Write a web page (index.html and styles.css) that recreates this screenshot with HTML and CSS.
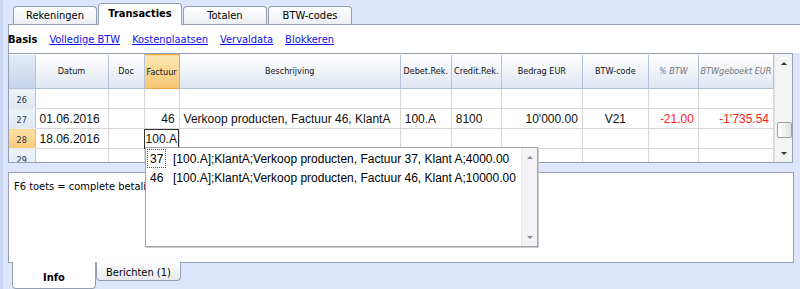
FILE: index.html
```html
<!DOCTYPE html>
<html lang="nl">
  <head>
    <meta charset="UTF-8" />
    <title>Transacties</title>
    <link rel="stylesheet" href="styles.css">
  </head>
  <body>
    <div class="window">
      <div class="tabs">
        <div class="tab">Rekeningen</div>
        <div class="tab active">Transacties</div>
        <div class="tab">Totalen</div>
        <div class="tab">BTW-codes</div>
      </div>

      <div class="panel">
        <nav class="views">
          <b>Basis</b>
          <a href="#">Volledige BTW</a>
          <a href="#">Kostenplaatsen</a>
          <a href="#">Vervaldata</a>
          <a href="#">Blokkeren</a>
        </nav>

        <div class="grid">
          <table>
            <colgroup>
              <col style="width:26px"><col style="width:73px"><col style="width:36px"><col style="width:35px">
              <col style="width:221px"><col style="width:51px"><col style="width:50px"><col style="width:81px">
              <col style="width:66px"><col style="width:50px"><col style="width:75px">
            </colgroup>
            <thead>
              <tr>
                <th class="corner"></th>
                <th>Datum</th>
                <th>Doc</th>
                <th class="current">Factuur</th>
                <th>Beschrijving</th>
                <th>Debet.Rek.</th>
                <th>Credit.Rek.</th>
                <th>Bedrag EUR</th>
                <th>BTW-code</th>
                <th class="calc">% BTW</th>
                <th class="calc">BTWgeboekt EUR</th>
              </tr>
            </thead>
            <tbody>
              <tr>
                <td class="rownum">26</td>
                <td></td><td></td><td></td><td></td><td></td><td></td><td></td><td></td><td></td><td></td>
              </tr>
              <tr>
                <td class="rownum">27</td>
                <td>01.06.2016</td>
                <td></td>
                <td class="num">46</td>
                <td>Verkoop producten, Factuur 46, KlantA</td>
                <td>100.A</td>
                <td>8100</td>
                <td class="num">10'000.00</td>
                <td class="center">V21</td>
                <td class="num neg">-21.00</td>
                <td class="num neg">-1'735.54</td>
              </tr>
              <tr>
                <td class="rownum active">28</td>
                <td>18.06.2016</td>
                <td></td>
                <td class="editing">100.A</td>
                <td></td><td></td><td></td><td></td><td></td><td></td><td></td>
              </tr>
              <tr>
                <td class="rownum">29</td>
                <td></td><td></td><td></td><td></td><td></td><td></td><td></td><td></td><td></td><td></td>
              </tr>
            </tbody>
          </table>

          <div class="vscroll">
            <span class="arrow up"></span>
            <span class="thumb"></span>
            <span class="arrow down"></span>
          </div>
        </div>
      </div>

      <div class="info-panel">F6 toets = complete betaling</div>

      <div class="bottom-tabs">
        <div class="btab active">Info</div>
        <div class="btab">Berichten (1)</div>
      </div>

      <!-- autocomplete list for the Factuur cell -->
      <div class="popup">
        <ul class="suggestions">
          <li class="focused"><span class="key">37</span>[100.A];KlantA;Verkoop producten, Factuur 37, Klant A;4000.00</li>
          <li><span class="key">46</span>[100.A];KlantA;Verkoop producten, Factuur 46, Klant A;10000.00</li>
        </ul>
        <div class="popup-scroll">
          <span class="arrow up"></span>
          <span class="arrow down"></span>
        </div>
      </div>
    </div>
  </body>
</html>
```

FILE: styles.css
```css
*,
*::before,
*::after {
  margin: 0;
  padding: 0;
  box-sizing: border-box;
}

:root {
  --page-blue: #dde6fa;
  --frame: #949fb3;
  --grid-line: #d6d6d6;
  --header-line: #b3c3da;
  --ui-font: "DejaVu Sans Condensed", "DejaVu Sans", sans-serif;
  --cell-font: "Liberation Sans", Arial, sans-serif;
}

body {
  background-color: var(--page-blue);
  width: 800px;
  height: 289px;
  overflow: hidden;
  font-family: var(--ui-font);
  font-size: 11px;
  color: #000;
}

.window {
  position: relative;
  height: 289px;
  border-left: 3px solid #cad8f1;
}

/* Top tabs */
.tabs {
  display: flex;
  align-items: flex-end;
  height: 24px;
  padding-left: 10px;
}

.tab {
  width: 84px;
  height: 18px;
  margin-right: 1px;
  border: 1px solid var(--frame);
  border-bottom: none;
  border-radius: 4px 4px 0 0;
  background: linear-gradient(#ffffff, #eceef2);
  text-align: center;
  line-height: 17px;
}

.tab.active {
  position: relative;
  z-index: 1;
  height: 22px;
  margin-bottom: -1px;
  background: #fff;
  font-weight: bold;
  line-height: 19px;
}

/* Panel with views and grid */
.panel {
  margin-left: 5px;
}

.views {
  display: flex;
  align-items: center;
  gap: 12px;
  height: 29px;
  padding: 0;
  background: #fff;
  border-top: 1px solid var(--frame);
  border-left: 1px solid var(--frame);
}

.views b {
  margin-left: -1px;
}

.views a {
  color: #1010ee;
}

.grid {
  display: flex;
  width: 785px;
  height: 110px;
  border: 1px solid var(--frame);
  background: #fff;
  overflow: hidden;
}

table {
  width: 765px;
  table-layout: fixed;
  border-collapse: collapse;
  font-family: var(--cell-font);
  font-size: 12px;
}

th {
  height: 34px;
  font-family: var(--ui-font);
  font-size: 9px;
  font-weight: normal;
  color: #111;
  background: linear-gradient(#ffffff, #dfe6f1);
  border-right: 1px solid var(--header-line);
  border-bottom: 1px solid var(--header-line);
  white-space: nowrap;
}

th.corner {
  background: linear-gradient(#e4ebf6, #c5d4ea);
}

th.current {
  background: linear-gradient(#fde7b4, #f7c572);
  border: 1px solid #f0a445;
}

th.calc {
  color: #777;
  font-style: italic;
}

td {
  height: 20px;
  padding: 0 4px;
  border-right: 1px solid var(--grid-line);
  border-bottom: 1px solid var(--grid-line);
  white-space: nowrap;
  overflow: hidden;
  color: #111;
}

td.rownum {
  padding: 3px 0 0;
  text-align: center;
  font-family: var(--ui-font);
  font-size: 9px;
  color: #26344f;
  background: linear-gradient(#eef3fa, #dfe7f3);
  border-right-color: var(--header-line);
  border-bottom-color: #e8eef6;
}

td.rownum.active {
  background: linear-gradient(#fde2a6, #f8c978);
}

td.num {
  text-align: right;
}

td.center {
  text-align: center;
}

td.neg {
  color: #ff2020;
}

td.editing {
  padding: 0 1px;
  outline: 1px solid #333;
  outline-offset: -1px;
}

.vscroll {
  position: relative;
  flex: 1;
  background: #f4f4f4;
  border-left: 1px solid #e2e2e2;
}

.arrow {
  position: absolute;
  left: 50%;
  width: 0;
  height: 0;
  margin-left: -3px;
  border-left: 3px solid transparent;
  border-right: 3px solid transparent;
}

.arrow.up {
  top: 8px;
  border-bottom: 3px solid #333;
}

.arrow.down {
  bottom: 7px;
  border-top: 3px solid #333;
}

.thumb {
  position: absolute;
  top: 68px;
  left: 2px;
  width: 15px;
  height: 16px;
  border: 1px solid #a3a3a3;
  border-radius: 2px;
  background: linear-gradient(90deg, #ffffff, #e2e2e2);
}

/* Info panel */
.info-panel {
  width: 786px;
  height: 91px;
  margin: 9px 0 0 5px;
  padding: 7px 0 0 5px;
  background: #fff;
  border: 1px solid var(--frame);
}

.bottom-tabs {
  display: flex;
  align-items: flex-start;
  padding-left: 9px;
}

.btab {
  width: 85px;
  height: 19px;
  margin-top: -1px;
  border: 1px solid var(--frame);
  border-top: none;
  border-radius: 0 0 4px 4px;
  background: linear-gradient(#ffffff, #e7e9ee);
  text-align: center;
  line-height: 21px;
}

.btab.active {
  width: 84px;
  height: 27px;
  background: #fff;
  font-weight: bold;
  line-height: 31px;
}

/* Autocomplete popup */
.popup {
  position: absolute;
  left: 142px;
  top: 147px;
  display: flex;
  width: 393px;
  height: 100px;
  background: #fff;
  border: 1px solid #a4a4a4;
  box-shadow: 1px 1px 0 #c9ccd4;
  font-family: var(--cell-font);
  font-size: 12px;
}

.suggestions {
  flex: 1;
  list-style: none;
  padding: 1px 0 0 1px;
}

.suggestions li {
  display: flex;
  align-items: center;
  height: 19px;
  white-space: nowrap;
}

.suggestions .key {
  width: 19px;
  height: 19px;
  margin-right: 7px;
  padding-left: 2px;
  line-height: 18px;
  border: 1px solid transparent;
}

.suggestions li.focused .key {
  border: 1px dotted #555;
}

.popup-scroll {
  position: relative;
  width: 16px;
  background: #f4f2f4;
  border-left: 1px solid #ebe8eb;
}

.popup-scroll .arrow.up {
  border-bottom-color: #8a8a8a;
}

.popup-scroll .arrow.down {
  border-top-color: #8a8a8a;
}
```
